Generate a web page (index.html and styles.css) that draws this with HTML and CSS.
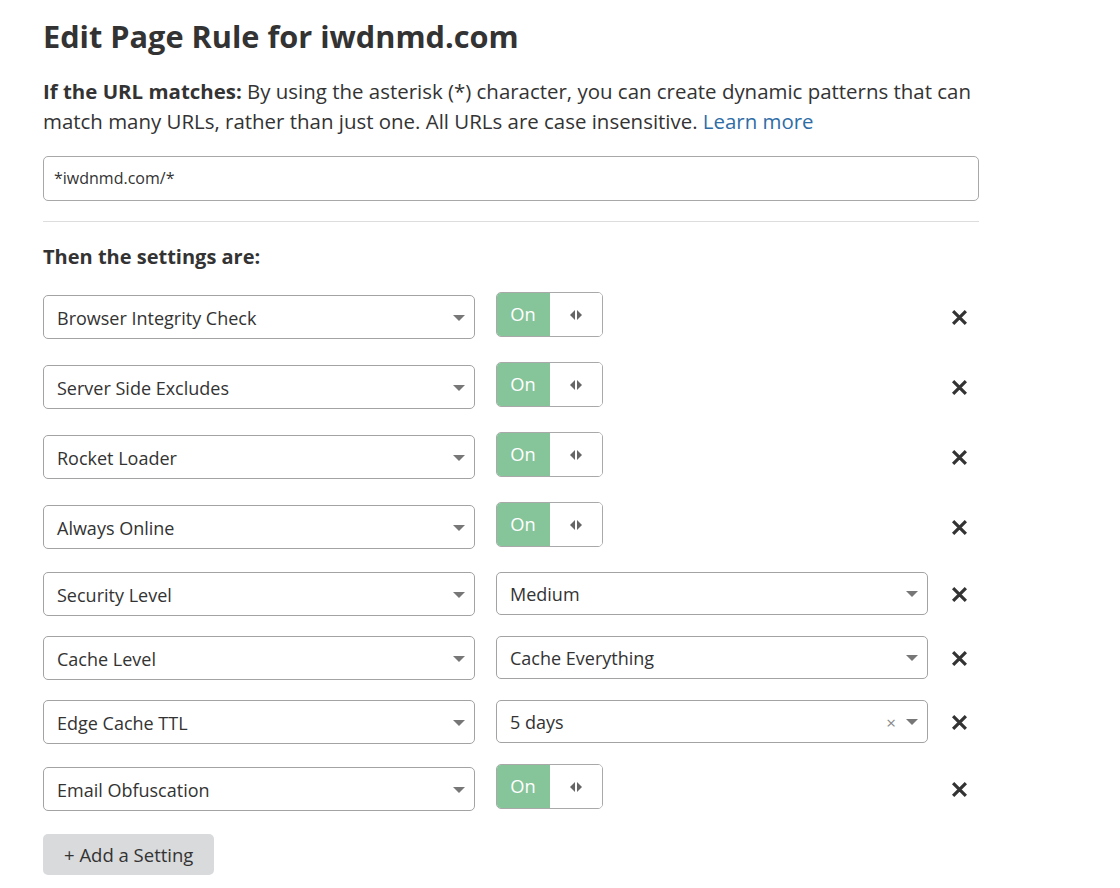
FILE: index.html
```html
<!DOCTYPE html>
<html>
<head>
<meta charset="utf-8">
<link rel="stylesheet" href="styles.css">
</head>
<body>
<div class="page">
  <h1 class="title">Edit Page Rule for iwdnmd.com</h1>
  <p class="intro"><strong>If the URL matches:</strong> By using the asterisk (*) character, you can create dynamic patterns that can match many URLs, rather than just one. All URLs are case insensitive. <a class="link" href="#">Learn more</a></p>
  <div class="url-input">*iwdnmd.com/*</div>
  <hr class="divider">
  <h2 class="subtitle">Then the settings are:</h2>

  <div class="row row-toggle">
    <div class="select"><span>Browser Integrity Check</span><span class="caret"></span></div>
    <div class="toggle"><span class="on">On</span><span class="handle"><span class="tri-l"></span><span class="tri-r"></span></span></div>
    <span class="remove"><svg width="16" height="16" viewBox="0 0 16 16"><path d="M2 2L14 14M14 2L2 14" stroke="#333" stroke-width="3"/></svg></span>
  </div>
  <div class="row row-toggle">
    <div class="select"><span>Server Side Excludes</span><span class="caret"></span></div>
    <div class="toggle"><span class="on">On</span><span class="handle"><span class="tri-l"></span><span class="tri-r"></span></span></div>
    <span class="remove"><svg width="16" height="16" viewBox="0 0 16 16"><path d="M2 2L14 14M14 2L2 14" stroke="#333" stroke-width="3"/></svg></span>
  </div>
  <div class="row row-toggle">
    <div class="select"><span>Rocket Loader</span><span class="caret"></span></div>
    <div class="toggle"><span class="on">On</span><span class="handle"><span class="tri-l"></span><span class="tri-r"></span></span></div>
    <span class="remove"><svg width="16" height="16" viewBox="0 0 16 16"><path d="M2 2L14 14M14 2L2 14" stroke="#333" stroke-width="3"/></svg></span>
  </div>
  <div class="row row-toggle">
    <div class="select"><span>Always Online</span><span class="caret"></span></div>
    <div class="toggle"><span class="on">On</span><span class="handle"><span class="tri-l"></span><span class="tri-r"></span></span></div>
    <span class="remove"><svg width="16" height="16" viewBox="0 0 16 16"><path d="M2 2L14 14M14 2L2 14" stroke="#333" stroke-width="3"/></svg></span>
  </div>
  <div class="row row-select">
    <div class="select"><span>Security Level</span><span class="caret"></span></div>
    <div class="select value"><span>Medium</span><span class="caret"></span></div>
    <span class="remove"><svg width="16" height="16" viewBox="0 0 16 16"><path d="M2 2L14 14M14 2L2 14" stroke="#333" stroke-width="3"/></svg></span>
  </div>
  <div class="row row-select">
    <div class="select"><span>Cache Level</span><span class="caret"></span></div>
    <div class="select value"><span>Cache Everything</span><span class="caret"></span></div>
    <span class="remove"><svg width="16" height="16" viewBox="0 0 16 16"><path d="M2 2L14 14M14 2L2 14" stroke="#333" stroke-width="3"/></svg></span>
  </div>
  <div class="row row-select">
    <div class="select"><span>Edge Cache TTL</span><span class="caret"></span></div>
    <div class="select value"><span>5 days</span><span class="clear">×</span><span class="caret"></span></div>
    <span class="remove"><svg width="16" height="16" viewBox="0 0 16 16"><path d="M2 2L14 14M14 2L2 14" stroke="#333" stroke-width="3"/></svg></span>
  </div>
  <div class="row row-toggle">
    <div class="select"><span>Email Obfuscation</span><span class="caret"></span></div>
    <div class="toggle"><span class="on">On</span><span class="handle"><span class="tri-l"></span><span class="tri-r"></span></span></div>
    <span class="remove"><svg width="16" height="16" viewBox="0 0 16 16"><path d="M2 2L14 14M14 2L2 14" stroke="#333" stroke-width="3"/></svg></span>
  </div>

  <button class="add-btn">+ Add a Setting</button>
</div>
</body>
</html>
```
FILE: styles.css
```css
html, body {
  margin: 0;
  padding: 0;
  background: #fff;
}
body {
  font-family: "Open Sans", "Noto Sans", sans-serif;
  color: #333;
}
.page {
  width: 936px;
  padding: 14px 43px 0;
}
.title {
  font-size: 30.7px;
  line-height: 44px;
  font-weight: 700;
  margin: 0 0 18px;
  color: #333;
}
.intro {
  font-size: 20.45px;
  line-height: 30px;
  margin: 0 0 20px;
}
.intro strong {
  font-weight: 700;
}
.link {
  color: #2f6da6;
  text-decoration: none;
}
.url-input {
  box-sizing: border-box;
  height: 45px;
  border: 1px solid #a8a8a8;
  border-radius: 5px;
  padding: 0 10px;
  font-size: 16px;
  line-height: 43px;
}
.divider {
  border: 0;
  border-top: 1px solid #ddd;
  margin: 20px 0 22px;
}
.subtitle {
  font-size: 20px;
  font-weight: 700;
  line-height: 26px;
  margin: 0 0 22px;
}
.row {
  display: flex;
  align-items: flex-start;
  margin-bottom: 20px;
}
.row-toggle {
  height: 50px;
}
.row-toggle > .select {
  margin-top: 3px;
}
.row-select {
  height: 44px;
}
.select {
  box-sizing: border-box;
  width: 432px;
  height: 44px;
  border: 1px solid #a3a3a3;
  border-radius: 5px;
  display: flex;
  align-items: center;
  padding: 1px 9px 0 13px;
  font-size: 18px;
  color: #333;
}
.select > span:first-child {
  flex: 1;
}
.select.value {
  margin-left: 21px;
  height: 43px;
}
.caret {
  width: 0;
  height: 0;
  border-left: 6px solid transparent;
  border-right: 6px solid transparent;
  border-top: 6px solid #777;
}
.clear {
  color: #888;
  font-size: 17px;
  margin-right: 10px;
  line-height: 1;
}
.toggle {
  margin-left: 21px;
  box-sizing: border-box;
  width: 107px;
  height: 45px;
  border: 1px solid #a9a9a9;
  border-radius: 5px;
  display: flex;
  overflow: hidden;
}
.toggle .on {
  width: 54px;
  background: #86c49a;
  color: #fff;
  font-size: 18.3px;
  display: flex;
  align-items: center;
  justify-content: center;
  margin: -1px 0 -1px -1px;
  padding-bottom: 2px;
}
.toggle .handle {
  flex: 1;
  display: flex;
  align-items: center;
  justify-content: center;
  gap: 2px;
  background: #fff;
}
.tri-l {
  width: 0;
  height: 0;
  border-top: 5px solid transparent;
  border-bottom: 5px solid transparent;
  border-right: 5px solid #666;
}
.tri-r {
  width: 0;
  height: 0;
  border-top: 5px solid transparent;
  border-bottom: 5px solid transparent;
  border-left: 5px solid #666;
}
.row-toggle .remove {
  margin-top: 3px;
}
.remove {
  margin-left: auto;
  width: 40px;
  height: 44px;
  display: flex;
  align-items: center;
  justify-content: center;
}
.remove svg {
  width: 17px;
  height: 17px;
}
.add-btn {
  display: block;
  margin-top: 0;
  background: #d9dadb;
  border: 0;
  border-radius: 5px;
  height: 41px;
  padding: 0 21px;
  font-family: inherit;
  font-size: 18.5px;
  color: #333;
}
```
